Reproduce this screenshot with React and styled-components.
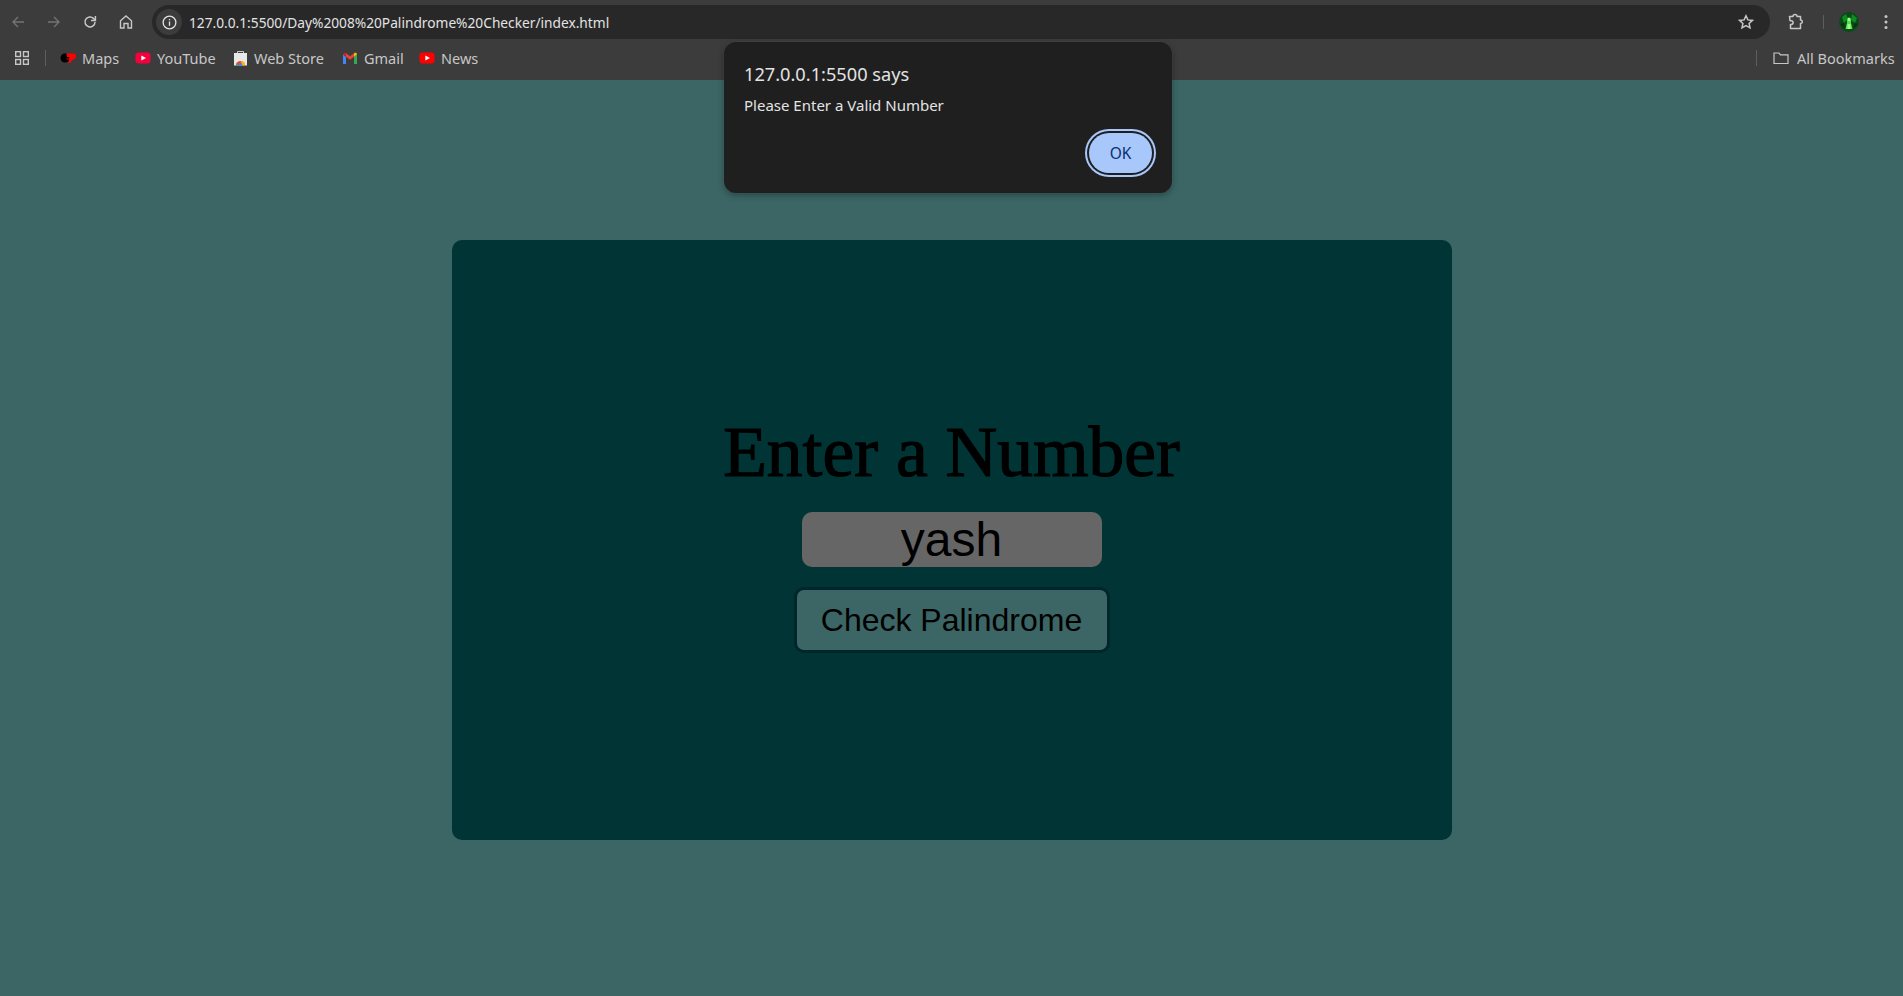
import React from "react";
import styled, { createGlobalStyle } from "styled-components";

const GlobalStyle = createGlobalStyle`
  html, body {
    margin: 0;
    padding: 0;
    height: 100%;
    overflow: hidden;
    background: #3b6665;
  }
`;

const Page = styled.div`
  position: relative;
  width: 100%;
  height: 996px;
  display: flex;
  flex-direction: column;
  font-family: "Noto Sans", "Open Sans", sans-serif;
`;

const Toolbar = styled.div`
  height: 40px;
  box-sizing: border-box;
  padding: 5px 0 1px 0;
  display: flex;
  align-items: center;
  background: #3c3c3c;
`;

const NavIcon = styled.button`
  width: 36px;
  height: 34px;
  padding: 0;
  border: 0;
  background: none;
  display: flex;
  align-items: center;
  justify-content: center;
  color: ${(p) => (p.$dim ? "#737373" : "#c7c7c7")};
`;

const NavGroup = styled.div`
  width: 152px;
  display: flex;
  flex: none;
`;

const AddressBar = styled.div`
  flex: 1;
  height: 34px;
  border-radius: 17px;
  background: #282828;
  display: flex;
  align-items: center;
  padding: 0 16px 0 4px;
`;

const InfoChip = styled.div`
  width: 26px;
  height: 26px;
  border-radius: 50%;
  background: #3c3c3c;
  display: flex;
  align-items: center;
  justify-content: center;
  color: #e3e3e3;
  flex: none;
`;

const Url = styled.span`
  flex: 1;
  margin-left: 7px;
  font-size: 13.73px;
  color: #e3e3e3;
  white-space: nowrap;
`;

const ToolbarRight = styled.div`
  width: 133px;
  flex: none;
  display: flex;
  align-items: center;
  padding-left: 17px;
  box-sizing: border-box;
  color: #c7c7c7;
`;

const ToolbarDivider = styled.div`
  width: 1px;
  height: 14px;
  background: #5e5e5e;
  flex: none;
  margin-left: 18px;
`;

const BarDivider = styled.div`
  width: 1px;
  height: 16px;
  background: #5e5e5e;
  flex: none;
`;

const Avatar = styled.div`
  width: 20px;
  height: 20px;
  margin: 0 25px 0 15px;
  flex: none;
  display: flex;
`;

const BookmarksBar = styled.div`
  height: 40px;
  box-sizing: border-box;
  padding-bottom: 4px;
  display: flex;
  align-items: center;
  background: #3c3c3c;
  color: #c7c7c7;
  font-size: 14.5px;
`;

const AppsSlot = styled.div`
  width: 45px;
  display: flex;
  justify-content: center;
  flex: none;
  padding-right: 1px;
  box-sizing: border-box;
`;

const BookmarkList = styled.div`
  flex: 1;
  display: flex;
  align-items: center;
  padding-left: 14px;
`;

const Bookmark = styled.div`
  width: ${(p) => p.$w}px;
  flex: none;
  display: flex;
  align-items: center;
  gap: 6px;
  white-space: nowrap;
`;

const AllBookmarks = styled.div`
  width: 146px;
  box-sizing: border-box;
  display: flex;
  align-items: center;
  gap: 8px;
  padding-left: 16px;
  white-space: nowrap;
`;

const Main = styled.main`
  flex: 1;
  display: flex;
  justify-content: center;
  padding-top: 160px;
`;

const Card = styled.section`
  width: 1000px;
  height: 600px;
  border-radius: 10px;
  background: #003435;
  display: flex;
  flex-direction: column;
  align-items: center;
  padding-top: 162px;
  box-sizing: border-box;
`;

const Title = styled.h1`
  margin: 0 0 10px;
  font-family: "Liberation Serif", serif;
  font-weight: 400;
  font-size: 71.5px;
  line-height: 100px;
  color: #000;
  -webkit-text-stroke: 1.2px #000;
`;

const NumberInput = styled.input`
  width: 300px;
  height: 55px;
  box-sizing: border-box;
  border: 0;
  outline: 0;
  border-radius: 10px;
  padding: 0;
  background: #666;
  color: #000;
  text-align: center;
  font-family: "Liberation Sans", Arial, sans-serif;
  font-size: 48px;
`;

const CheckButton = styled.button`
  margin-top: 20px;
  width: 316px;
  height: 66px;
  box-sizing: border-box;
  border: 3px solid #00252a;
  border-radius: 10px;
  background: #3b6665;
  color: #000;
  font-family: "Liberation Sans", Arial, sans-serif;
  font-size: 32px;
`;

const Dialog = styled.div`
  position: absolute;
  left: 724px;
  top: 42px;
  width: 448px;
  height: 151px;
  box-sizing: border-box;
  padding: 20px;
  border-radius: 12px;
  background: #1f1f1f;
  box-shadow: 0 2px 6px rgba(0, 0, 0, 0.35), 0 0 0 1px rgba(255, 255, 255, 0.04);
  color: #e3e3e3;
  display: flex;
  flex-direction: column;
`;

const DialogTitle = styled.div`
  font-size: 18.2px;
  line-height: 24px;
`;

const DialogText = styled.div`
  margin-top: 9px;
  font-size: 15px;
  line-height: 20px;
`;

const DialogActions = styled.div`
  margin-top: auto;
  display: flex;
  justify-content: flex-end;
`;

const OkButton = styled.button`
  width: 63px;
  height: 40px;
  border: 0;
  padding: 0;
  border-radius: 20px;
  background: #a8c7fa;
  color: #062e6f;
  font-family: inherit;
  font-size: 15.5px;
  box-shadow: 0 0 0 2px #1f1f1f, 0 0 0 4px #a8c7fa;
`;

const BackIcon = ({ flip }) => (
  <svg width="16" height="16" viewBox="0 0 16 16" fill="none" stroke="currentColor" strokeWidth="1.4" style={flip ? { transform: "scaleX(-1)" } : undefined}>
    <path d="M14 8H3M8 3 3 8l5 5" />
  </svg>
);

const ReloadIcon = () => (
  <svg width="16" height="16" viewBox="0 0 16 16" fill="none" stroke="currentColor" strokeWidth="1.5">
    <path d="M13 8a5 5 0 1 1-1.500-3.600L13 6" />
    <path d="M13.400 2v4.400H9" />
  </svg>
);

const HomeIcon = () => (
  <svg width="16" height="16" viewBox="0 0 16 16" fill="none" stroke="currentColor" strokeWidth="1.4">
    <path d="M2.500 14V6.800L8 2l5.500 4.800V14h-3.500V9.500h-4V14z" />
  </svg>
);

const InfoIcon = () => (
  <svg width="15" height="15" viewBox="0 0 16 16" fill="none" stroke="currentColor" strokeWidth="1.4">
    <circle cx="8" cy="8" r="6.800" />
    <path d="M8 7v4.500M8 4.200v1.500" />
  </svg>
);

const StarIcon = () => (
  <svg width="16" height="16" viewBox="0 0 16 16" fill="none" stroke="#c7c7c7" strokeWidth="1.5">
    <path d="m8 1.800 1.900 4.100 4.500.5-3.300 3 .9 4.400L8 11.600l-4 2.200.9-4.400-3.300-3 4.500-.5z" />
  </svg>
);

const PuzzleIcon = () => (
  <svg width="18" height="18" viewBox="0 0 18 18" fill="none" stroke="currentColor" strokeWidth="1.5" strokeLinejoin="round">
    <path d="M2.500 3.500H6a2 2 0 0 1 4 0h3.500V7a1.800 1.800 0 0 1 0 3.600V15.500H3.500v-4h.7a1.900 1.900 0 0 0 0-3.800H3z" />
  </svg>
);

const DotsIcon = () => (
  <svg width="4" height="16" viewBox="0 0 4 16" fill="currentColor">
    <circle cx="2" cy="2.500" r="1.500" />
    <circle cx="2" cy="8" r="1.500" />
    <circle cx="2" cy="13.500" r="1.500" />
  </svg>
);

const AppsIcon = () => (
  <svg width="14" height="14" viewBox="0 0 14 14" fill="none" stroke="currentColor" strokeWidth="1.400">
    <rect x="0.700" y="0.700" width="4.800" height="4.800" />
    <rect x="8.500" y="0.700" width="4.800" height="4.800" />
    <rect x="0.700" y="8.500" width="4.800" height="4.800" />
    <rect x="8.500" y="8.500" width="4.800" height="4.800" />
  </svg>
);

const AvatarArt = () => (
  <svg width="20" height="20" viewBox="0 0 20 20">
    <circle cx="10" cy="10" r="10" fill="#0a4a17" />
    <path d="M3 5 7 2l2 5-4 4zM13 2l5 4-2 5-4-3z" fill="#0f8a26" />
    <path d="M1 12l4-1 1 6zM14 17l2-6 3 1z" fill="#063010" />
    <path d="M8 7.500a2 2 0 0 1 4 0V11l1.500 6h-7L8 11z" fill="#4ee04a" />
    <path d="M9 6h2v3H9zM8.500 12h3v5h-3z" fill="#a6f58a" />
  </svg>
);

const MapsIcon = () => (
  <svg width="16" height="16" viewBox="0 0 16 16">
    <circle cx="5" cy="8" r="4.500" fill="#000" />
    <path d="M6.500 3.500H13a3 3 0 0 1 3 3c0 2.500-2.500 3-4 3.500l-1.500 3H8.500l1-3.500h-3V8.500H9.500V7H7z" fill="#f00" />
  </svg>
);

const YoutubeIcon = ({ red = "#f5003c" }) => (
  <svg width="16" height="16" viewBox="0 0 16 16">
    <rect x="0.500" y="2.500" width="15" height="11" rx="3" fill={red} />
    <path d="M6.300 5.500v5L11 8z" fill="#fff" />
  </svg>
);

const StoreIcon = () => (
  <svg width="15" height="16" viewBox="0 0 14 16">
    <path d="M4 3V1.500h6V3" fill="none" stroke="#ccc" strokeWidth="1" />
    <rect x="0.500" y="3" width="13" height="12.500" fill="#e8e8e8" />
    <path d="M2.500 15.500a4.500 4.500 0 0 1 9 0z" fill="#ea4335" />
    <path d="M7 11a4.500 4.500 0 0 1 4.500 4.500H9z" fill="#fbbc04" />
    <path d="M2.500 15.500a4.500 4.500 0 0 1 1-2.800L5 15.500z" fill="#34a853" />
    <circle cx="7" cy="15" r="1.800" fill="#4285f4" />
  </svg>
);

const GmailIcon = () => (
  <svg width="16" height="16" viewBox="0 0 16 16">
    <path d="M1 14V4.500l3 2.300V14z" fill="#4285f4" />
    <path d="M12 14V6.800l3-2.300V14z" fill="#34a853" />
    <path d="M4 6.800V3.200L8 6.300l4-3.100v3.600L8 9.800z" fill="#ea4335" />
    <path d="M1 4.500C1 2.800 2.800 2.200 4 3.200v3.600z" fill="#c5221f" />
    <path d="M12 3.200c1.200-1 3-.4 3 1.300l-3 2.300z" fill="#fbbc04" />
  </svg>
);

const FolderIcon = () => (
  <svg width="16" height="16" viewBox="0 0 16 16" fill="none" stroke="currentColor" strokeWidth="1.200">
    <path d="M1 13.500V3h5l1.500 1.800H15v8.700z" />
  </svg>
);

const bookmarks = [
  { label: "Maps", icon: <MapsIcon />, width: 75 },
  { label: "YouTube", icon: <YoutubeIcon />, width: 98 },
  { label: "Web Store", icon: <StoreIcon />, width: 109 },
  { label: "Gmail", icon: <GmailIcon />, width: 77 },
  { label: "News", icon: <YoutubeIcon red="#f00" />, width: 70 },
];

const App = () => (
  <Page>
    <GlobalStyle />
    <Toolbar>
      <NavGroup>
        <NavIcon $dim><BackIcon /></NavIcon>
        <NavIcon $dim><BackIcon flip /></NavIcon>
        <NavIcon><ReloadIcon /></NavIcon>
        <NavIcon><HomeIcon /></NavIcon>
      </NavGroup>
      <AddressBar>
        <InfoChip><InfoIcon /></InfoChip>
        <Url>127.0.0.1:5500/Day%2008%20Palindrome%20Checker/index.html</Url>
        <StarIcon />
      </AddressBar>
      <ToolbarRight>
        <PuzzleIcon />
        <ToolbarDivider />
        <Avatar><AvatarArt /></Avatar>
        <DotsIcon />
      </ToolbarRight>
    </Toolbar>
    <BookmarksBar>
      <AppsSlot><AppsIcon /></AppsSlot>
      <BarDivider />
      <BookmarkList>
        {bookmarks.map((b) => (
          <Bookmark key={b.label} $w={b.width}>
            {b.icon}
            <span>{b.label}</span>
          </Bookmark>
        ))}
      </BookmarkList>
      <BarDivider />
      <AllBookmarks>
        <FolderIcon />
        <span>All Bookmarks</span>
      </AllBookmarks>
    </BookmarksBar>
    <Main>
      <Card>
        <Title>Enter a Number</Title>
        <NumberInput type="text" value="yash" readOnly />
        <CheckButton>Check Palindrome</CheckButton>
      </Card>
    </Main>
    <Dialog role="alertdialog">
      <DialogTitle>127.0.0.1:5500 says</DialogTitle>
      <DialogText>Please Enter a Valid Number</DialogText>
      <DialogActions>
        <OkButton>OK</OkButton>
      </DialogActions>
    </Dialog>
  </Page>
);

export default App;
